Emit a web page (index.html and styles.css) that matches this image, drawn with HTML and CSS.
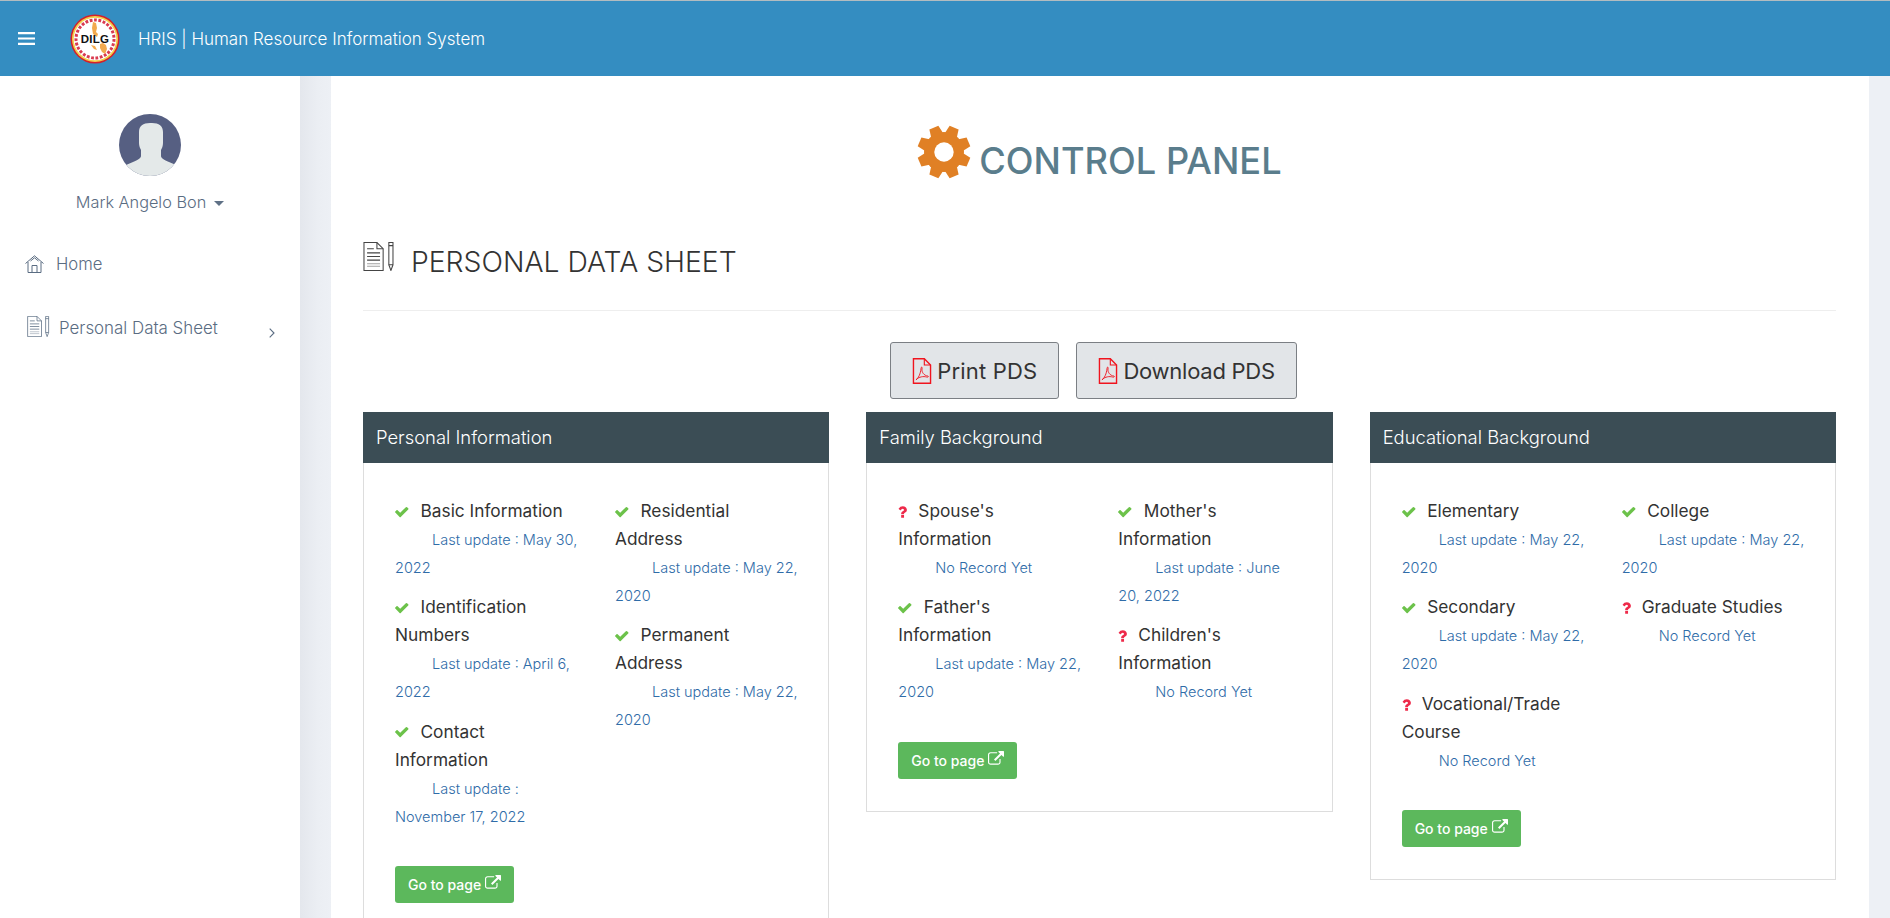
FILE: index.html
```html
<!DOCTYPE html>
<html lang="en">
<head>
<meta charset="utf-8">
<title>HRIS | Human Resource Information System</title>
<link rel="stylesheet" href="styles.css">
</head>
<body>
<svg class="defs" width="0" height="0" aria-hidden="true">
  <defs>
    <symbol id="i-check" viewBox="0 0 1792 1792"><path d="M1671 566q0 40-28 68l-724 724-136 136q-28 28-68 28t-68-28l-136-136-362-362q-28-28-28-68t28-68l136-136q28-28 68-28t68 28l294 295 656-657q28-28 68-28t68 28l136 136q28 28 28 68z"/></symbol>
    <symbol id="i-question" viewBox="416 256 1000 1280"><path d="M1088 1256v240q0 16-12 28t-28 12h-240q-16 0-28-12t-12-28v-240q0-16 12-28t28-12h240q16 0 28 12t12 28zm316-600q0 54-15.500 101t-35 76.500-55 59.500-57.500 43.500-61 35.500q-41 23-68.500 65t-27.500 67q0 17-12 32.500t-28 15.500h-240q-15 0-25.500-18.500t-10.500-37.500v-45q0-83 65-156.500t143-108.500q59-27 84-56t25-76q0-42-46.500-74t-107.500-32q-65 0-108 29-35 25-107 115-13 16-31 16-12 0-25-8l-164-125q-13-10-15.500-25t5.500-28q160-266 464-266 80 0 161 31t146 83 106 127.500 41 158.500z"/></symbol>
    <symbol id="i-link" viewBox="0 0 1792 1792"><path d="M1408 928v320q0 119-84.500 203.500t-203.500 84.500h-832q-119 0-203.500-84.500t-84.500-203.500v-832q0-119 84.500-203.500t203.500-84.500h704q14 0 23 9t9 23v64q0 14-9 23t-23 9h-704q-66 0-113 47t-47 113v832q0 66 47 113t113 47h832q66 0 113-47t47-113v-320q0-14 9-23t23-9h64q14 0 23 9t9 23zm384-864v512q0 26-19 45t-45 19-45-19l-176-176-652 652q-10 10-23 10t-23-10l-114-114q-10-10-10-23t10-23l652-652-176-176q-19-19-19-45t19-45 45-19h512q26 0 45 19t19 45z"/></symbol>
    <symbol id="i-docpen" viewBox="0 0 30 28">
      <g fill="none" stroke="currentColor" stroke-width="1">
        <path d="M.5.5H13L19 6.500V27.500H.5Z"/>
        <path d="M13 .5V6.500H19"/>
        <path d="M3.500 6.500H10M3.500 10.500H16M3.500 14H16M3.500 17.500H16"/>
        <path d="M3.500 21H16M3.500 23.500H16" stroke-opacity=".5"/>
        <path d="M24.500 .5H28.500V22L26.500 27.500L24.500 22Z"/>
        <path d="M24.500 3.500H28.500M24.500 22H28.500"/>
      </g>
    </symbol>
    <symbol id="i-pdf" viewBox="0 0 20 28">
      <g fill="none" stroke="#f0141e">
        <path stroke-width="1.500" d="M.8.8H12.500L19.200 7.500V27.200H.8Z"/>
        <path stroke-width="1.200" d="M12.500 .8V7.500H19.200"/>
        <path stroke-width="1" d="M3.500 23.500C6 22 8.500 17 9 11C9.200 9 10.500 9.500 10 12C9.500 15 12 19 16.500 19.500C17.500 19.800 16.500 21 15 20.500C11.500 19.500 7 20 3.500 23.500Z"/>
      </g>
    </symbol>
  </defs>
</svg>

<header class="topbar">
  <svg class="burger" viewBox="0 0 17 13" aria-hidden="true"><path d="M0 0h17v2.200H0zM0 5.400h17v2.200H0zM0 10.800h17v2.200H0z" fill="#fff"/></svg>
  <svg class="logo" viewBox="0 0 50 50" aria-hidden="true">
    <circle cx="25" cy="25" r="24.500" fill="#d5202a"/>
    <circle cx="25" cy="25" r="23" fill="#f3d04a"/>
    <circle cx="25" cy="25" r="21.300" fill="#fff"/>
    <circle cx="25" cy="25" r="19" fill="none" stroke="#d93a50" stroke-width="3" stroke-dasharray="2.800 1.600"/>
    <path d="M23 8l3 1 1 5-1 4 2 2-1 3-4-3-1-6zM30 30l3-1 3 2 1 4-2 5-3-2-2-4zM21 31l4 1 2 4-3-1z" fill="#f2a94e"/>
    <text class="logo-text" x="25" y="29" text-anchor="middle">DILG</text>
  </svg>
  <span class="brand">HRIS | Human Resource Information System</span>
</header>

<div class="shell">
  <aside class="sidebar">
    <svg class="avatar" viewBox="0 0 62 62" aria-hidden="true">
      <defs><clipPath id="avatar-clip"><circle cx="31" cy="31" r="31"/></clipPath></defs>
      <g clip-path="url(#avatar-clip)">
        <rect width="62" height="62" fill="#565f82"/>
        <path d="M31 9c-7 0-11 3-11 9v11c0 3 1 5 2 7v6c0 2-3 4-8 6l-7 3v11h50V51l-7-3c-5-2-8-4-8-6v-6c1-2 2-4 2-7V18c0-6-4-9-11-9z" fill="#e4e9e9"/>
      </g>
    </svg>
    <div class="user">Mark Angelo Bon<span class="caret"></span></div>
    <nav class="nav">
      <a class="nav-item nav-home">
        <svg class="home-icon" viewBox="0 0 19 18" aria-hidden="true"><path d="M.5 8.500L9.500.8L18.500 8.500M3 7V17.500H16V7M7 17.500V10.500H12V17.500M5.500 6L9.500 2.800L13.500 6" fill="none" stroke="currentColor"/></svg>
        Home
      </a>
      <a class="nav-item nav-pds">
        <svg class="nav-doc"><use href="#i-docpen"/></svg>
        Personal Data Sheet
        <svg class="chevron" viewBox="0 0 6 10" aria-hidden="true"><path d="M.7.7L5 5L.7 9.300" fill="none" stroke="currentColor" stroke-width="1.100"/></svg>
      </a>
    </nav>
  </aside>

  <main class="main">
    <div class="panel">
      <h1 class="panel-title">
        <svg class="gear" viewBox="0 0 100 100" aria-hidden="true">
          <g fill="#e08025">
            <circle cx="50" cy="50" r="37"/>
            <polygon points="38,18 41,1 59,1 62,18" transform="rotate(22.500 50 50)"/>
            <polygon points="38,18 41,1 59,1 62,18" transform="rotate(67.500 50 50)"/>
            <polygon points="38,18 41,1 59,1 62,18" transform="rotate(112.500 50 50)"/>
            <polygon points="38,18 41,1 59,1 62,18" transform="rotate(157.500 50 50)"/>
            <polygon points="38,18 41,1 59,1 62,18" transform="rotate(202.500 50 50)"/>
            <polygon points="38,18 41,1 59,1 62,18" transform="rotate(247.500 50 50)"/>
            <polygon points="38,18 41,1 59,1 62,18" transform="rotate(292.500 50 50)"/>
            <polygon points="38,18 41,1 59,1 62,18" transform="rotate(337.500 50 50)"/>
          </g>
          <circle cx="50" cy="50" r="18" fill="#fff"/>
        </svg>
        <span class="panel-text">CONTROL PANEL</span>
      </h1>

      <h2 class="section-title"><svg class="section-icon"><use href="#i-docpen"/></svg>PERSONAL DATA SHEET</h2>
      <hr class="rule">

      <div class="actions">
        <a class="pds-btn btn-print"><svg class="pdf"><use href="#i-pdf"/></svg>Print PDS</a>
        <a class="pds-btn btn-download"><svg class="pdf"><use href="#i-pdf"/></svg>Download PDS</a>
      </div>

      <div class="cards">
        <section class="card">
          <h3 class="card-head">Personal Information</h3>
          <div class="card-body">
            <div class="columns">
              <div class="col">
                <div class="item"><p class="item-title"><svg class="ok"><use href="#i-check"/></svg>Basic Information</p><p class="item-date">Last update : May 30,<br>2022</p></div>
                <div class="item"><p class="item-title"><svg class="ok"><use href="#i-check"/></svg>Identification<br>Numbers</p><p class="item-date">Last update : April 6,<br>2022</p></div>
                <div class="item"><p class="item-title"><svg class="ok"><use href="#i-check"/></svg>Contact<br>Information</p><p class="item-date">Last update :<br>November 17, 2022</p></div>
              </div>
              <div class="col">
                <div class="item"><p class="item-title"><svg class="ok"><use href="#i-check"/></svg>Residential<br>Address</p><p class="item-date">Last update : May 22,<br>2020</p></div>
                <div class="item"><p class="item-title"><svg class="ok"><use href="#i-check"/></svg>Permanent<br>Address</p><p class="item-date">Last update : May 22,<br>2020</p></div>
              </div>
            </div>
            <a class="go-btn">Go to page <svg class="go-icon"><use href="#i-link"/></svg></a>
          </div>
        </section>

        <section class="card">
          <h3 class="card-head">Family Background</h3>
          <div class="card-body">
            <div class="columns">
              <div class="col">
                <div class="item"><p class="item-title"><svg class="no"><use href="#i-question"/></svg>Spouse's<br>Information</p><p class="item-date">No Record Yet</p></div>
                <div class="item"><p class="item-title"><svg class="ok"><use href="#i-check"/></svg>Father's<br>Information</p><p class="item-date">Last update : May 22,<br>2020</p></div>
              </div>
              <div class="col">
                <div class="item"><p class="item-title"><svg class="ok"><use href="#i-check"/></svg>Mother's<br>Information</p><p class="item-date">Last update : June<br>20, 2022</p></div>
                <div class="item"><p class="item-title"><svg class="no"><use href="#i-question"/></svg>Children's<br>Information</p><p class="item-date">No Record Yet</p></div>
              </div>
            </div>
            <a class="go-btn">Go to page <svg class="go-icon"><use href="#i-link"/></svg></a>
          </div>
        </section>

        <section class="card">
          <h3 class="card-head">Educational Background</h3>
          <div class="card-body">
            <div class="columns">
              <div class="col">
                <div class="item"><p class="item-title"><svg class="ok"><use href="#i-check"/></svg>Elementary</p><p class="item-date">Last update : May 22,<br>2020</p></div>
                <div class="item"><p class="item-title"><svg class="ok"><use href="#i-check"/></svg>Secondary</p><p class="item-date">Last update : May 22,<br>2020</p></div>
                <div class="item"><p class="item-title"><svg class="no"><use href="#i-question"/></svg>Vocational/Trade<br>Course</p><p class="item-date">No Record Yet</p></div>
              </div>
              <div class="col">
                <div class="item"><p class="item-title"><svg class="ok"><use href="#i-check"/></svg>College</p><p class="item-date">Last update : May 22,<br>2020</p></div>
                <div class="item"><p class="item-title"><svg class="no"><use href="#i-question"/></svg>Graduate Studies</p><p class="item-date">No Record Yet</p></div>
              </div>
            </div>
            <a class="go-btn">Go to page <svg class="go-icon"><use href="#i-link"/></svg></a>
          </div>
        </section>
      </div>
    </div>
  </main>
</div>
</body>
</html>
```

FILE: styles.css
```css
* { box-sizing: border-box; }
html, body { margin: 0; height: 100%; }
body {
  height: 100vh;
  overflow: hidden;
  display: flex;
  flex-direction: column;
  font-family: Inter, "Noto Sans", sans-serif;
  font-size: 16.700px;
  color: #333;
  background: #edf0f5;
}
a { color: inherit; text-decoration: none; }
p, h1, h2, h3 { margin: 0; }
.defs { position: absolute; }

/* top bar */
.topbar {
  flex: none;
  height: 76px;
  display: flex;
  align-items: center;
  background: #348dc1;
  border-top: 1px solid #b3bcc0;
  color: #fff;
}
.burger { width: 17px; height: 13px; margin: 0 35px 0 18px; }
.logo { width: 50px; height: 50px; margin-right: 18px; }
.logo-text { font: 700 11.500px "Liberation Sans", sans-serif; fill: #111; letter-spacing: .3px; }
.brand { font-size: 17px; font-weight: 300; }

/* shell */
.shell { flex: 1; display: flex; min-height: 0; }
.sidebar {
  flex: none;
  width: 300px;
  background: #fff;
  color: #5a6c82;
  font-weight: 300;
  display: flex;
  flex-direction: column;
  align-items: center;
  padding-top: 38px;
}
.avatar { width: 62px; height: 62px; flex: none; }
.user { margin-top: 16px; line-height: 20px; font-size: 16.300px; }
.caret {
  display: inline-block;
  width: 0;
  height: 0;
  margin-left: 8px;
  vertical-align: 2px;
  border-left: 5px solid transparent;
  border-right: 5px solid transparent;
  border-top: 5px solid #5f7186;
}
.nav { align-self: stretch; margin-top: 41px; }
.nav-item { display: flex; align-items: center; line-height: 22px; }
.nav-home { padding-left: 25px; }
.home-icon { width: 19px; height: 18px; margin-right: 12px; }
.nav-pds { padding-left: 27px; margin-top: 42px; font-size: 16.900px; }
.nav-doc { width: 23px; height: 21px; margin-right: 9px; margin-top: -4px; }
.chevron { width: 6px; height: 10px; margin-left: 51px; margin-top: 10px; }

/* main */
.main {
  flex: 1;
  min-width: 0;
  padding: 0 21px 0 31px;
  background: linear-gradient(to right, #e4e7ed, #ebeef3 18px, #edf0f5 31px);
}
.panel { height: 100%; background: #fff; padding: 0 33px 0 32px; overflow: hidden; }
.panel-title {
  display: flex;
  align-items: center;
  justify-content: center;
  padding-top: 48px;
  height: 104px;
  font-size: 36.200px;
  font-weight: 500;
  color: #5a7d8c;
}
.panel-text { padding-top: 18px; }
.gear { width: 54px; height: 54px; margin-right: 8px; }
.section-title {
  display: flex;
  align-items: center;
  height: 32px;
  margin-top: 66px;
  font-size: 28.300px;
  font-weight: 300;
  color: #333;
}
.section-icon { width: 32px; height: 29px; margin-right: 16px; margin-top: -12px; color: #444; }
.rule { border: 0; border-top: 1px solid #eee; margin: 32px 0 0; }
.actions { display: flex; justify-content: center; gap: 17px; margin-top: 31px; padding-right: 12px; }
.pds-btn {
  height: 57px;
  display: flex;
  align-items: center;
  padding: 0 21px;
  font-size: 22px;
  font-weight: 400;
  color: #333;
  background: #e2e5e8;
  border: 1px solid #7b7f84;
  border-radius: 3px;
}
.btn-print { letter-spacing: .2px; }
.btn-download { letter-spacing: -.25px; }
.pdf { width: 20px; height: 26px; margin-right: 5px; }

/* cards */
.cards { display: grid; grid-template-columns: repeat(3, minmax(0, 1fr)); gap: 37px; margin-top: 13px; align-items: start; }
.card-head {
  height: 51px;
  padding: 0 13px 2px;
  display: flex;
  align-items: center;
  background: #3b4d55;
  color: #fff;
  font-size: 18.400px;
  font-weight: 300;
}
.card-body {
  border: 1px solid #ddd;
  border-top: 0;
  padding: 34px 31px 32px;
}
.columns { display: grid; grid-template-columns: 190px 190px; column-gap: 30px; }
.item { margin-bottom: 12.300px; }
.item-title { font-size: 17.300px; line-height: 28px; font-weight: 400; color: #333; white-space: nowrap; }
.item-date { font-size: 14.500px; line-height: 28px; font-weight: 300; color: #2f6ca8; text-indent: 37px; white-space: nowrap; padding-top: 1px; margin-bottom: -1px; }
.ok { width: 15.500px; height: 15.500px; margin: 0 11px 0 -1px; vertical-align: -2px; fill: #6cc24a; }
.no { width: 9px; height: 12px; margin-right: 11px; vertical-align: -1px; fill: #ee2a4a; }
.go-btn {
  display: inline-flex;
  align-items: center;
  height: 37px;
  margin-top: 24.600px;
  padding: 0 13px;
  background: #5cb85c;
  border-radius: 3px;
  color: #fff;
  font-size: 14px;
  font-weight: 500;
  white-space: pre;
}
.go-icon { width: 16px; height: 16px; fill: #fff; margin-bottom: 3px; }
```
